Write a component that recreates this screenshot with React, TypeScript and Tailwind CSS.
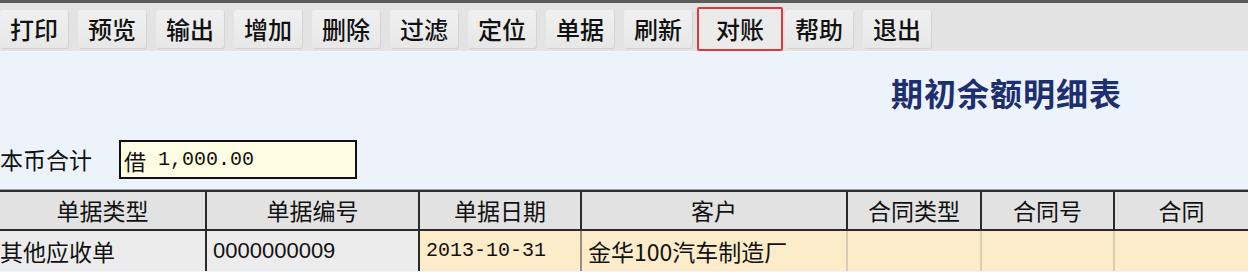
import React from "react";

const TOOLS = ["打印", "预览", "输出", "增加", "删除", "过滤", "定位", "单据", "刷新", "对账", "帮助", "退出"];

const COLS = [
  { title: "单据类型", w: 207, value: "其他应收单", pl: "pl-0", bg: "bg-[#ececec]", sep: "border-[#2a2a2a]", font: "cjk" },
  { title: "单据编号", w: 213, value: "0000000009", pl: "pl-[6px]", bg: "bg-[#ececec]", sep: "border-[#2a2a2a]", font: "sans" },
  { title: "单据日期", w: 162, value: "2013-10-31", pl: "pl-[6px]", bg: "bg-[#fdecc9]", sep: "border-[#9a9080]", font: "mono" },
  { title: "客户", w: 266, value: "金华100汽车制造厂", pl: "pl-[6px]", bg: "bg-[#fdecc9]", sep: "border-[#d9cdb4]", font: "cjk" },
  { title: "合同类型", w: 134, value: "", pl: "pl-[6px]", bg: "bg-[#fdecc9]", sep: "border-[#d9cdb4]", font: "cjk" },
  { title: "合同号", w: 133, value: "", pl: "pl-[6px]", bg: "bg-[#fdecc9]", sep: "border-[#d9cdb4]", font: "cjk" },
  { title: "合同", w: 133, value: "", pl: "pl-[6px]", bg: "bg-[#fdecc9]", sep: "border-transparent", font: "cjk" },
];

const SANS = "font-['Liberation_Sans','Noto_Sans_CJK_SC',sans-serif] text-[22px]";
const CJK = "font-['Noto_Sans_CJK_SC',sans-serif] text-[23px]";
const MONO = "font-['Liberation_Mono','Noto_Sans_CJK_SC',monospace] text-[20px]";

function ToolButton({ label }: { label: string }) {
  if (label === "对账") {
    // the highlighted button sits in a red frame
    return (
      <div className="-ml-[5px] mr-[2px] -mt-[3px] flex h-[44px] w-[86px] items-center justify-center rounded-[2px] border-2 border-[#e0383c] bg-[#ebebeb]">
        <span className="font-['Noto_Sans_CJK_SC',sans-serif] text-[24px] font-medium leading-none text-[#111]">{label}</span>
      </div>
    );
  }
  return (
    <div className="mr-[10px] flex h-[38px] w-[68px] items-center justify-center rounded-[3px] bg-gradient-to-b from-[#f0f0f0] to-[#e7e7e7] shadow-[1px_1px_1px_rgba(0,0,0,0.07)]">
      <span className="font-['Noto_Sans_CJK_SC',sans-serif] text-[24px] font-medium leading-none text-[#111]">{label}</span>
    </div>
  );
}

export default function App() {
  return (
    <div className="h-[272px] w-[1248px] overflow-hidden bg-[#edf3fa]">
      <div className="h-[3px] bg-[#5b5b5b]" />
      <div className="flex h-[49px] items-start border-b border-[#f4f6f8] bg-[#e3e3e3] pt-[7px]">
        {TOOLS.map((t) => (
          <ToolButton key={t} label={t} />
        ))}
      </div>

      <div className="h-[137px] pt-[20px]">
        <div className="flex h-[40px] justify-end pr-[126px]">
          <span className="font-['Noto_Sans_CJK_SC',sans-serif] text-[32px] font-bold leading-[40px] tracking-[1px] text-[#1d2f6f]">
            期初余额明细表
          </span>
        </div>
        <div className="mt-[28px] flex h-[39px] items-center">
          <span className={`${CJK} w-[119px] leading-none text-[#111]`}>本币合计</span>
          <div className="flex h-[39px] w-[238px] items-center border-2 border-[#111] bg-[#fffee4] pl-[3px]">
            <span className="font-['Noto_Sans_CJK_SC',sans-serif] text-[22px] leading-none text-[#111]">借</span>
            <span className={`${MONO} ml-[12px] leading-none text-[#111]`}>1,000.00</span>
          </div>
        </div>
      </div>

      <div className="border-t border-[#9aa0a6]">
        <div className="flex border-t-2 border-[#2e2e2e]">
          {COLS.map((c) => (
            <div
              key={c.title}
              style={{ width: c.w }}
              className="flex h-[39px] shrink-0 items-center justify-center border-b-2 border-r-2 border-[#2a2a2a] bg-[#e2e2e2] last:border-r-0"
            >
              <span className={`${CJK} leading-none text-[#111]`}>{c.title}</span>
            </div>
          ))}
        </div>
        <div className="flex">
          {COLS.map((c) => (
            <div
              key={c.title}
              style={{ width: c.w }}
              className={`flex h-[40px] shrink-0 items-center border-r-2 ${c.sep} ${c.bg} ${c.pl}`}
            >
              <span className={`${c.font === "mono" ? MONO : c.font === "sans" ? SANS : CJK} leading-none text-[#111]`}>
                {c.value}
              </span>
            </div>
          ))}
        </div>
      </div>
    </div>
  );
}
